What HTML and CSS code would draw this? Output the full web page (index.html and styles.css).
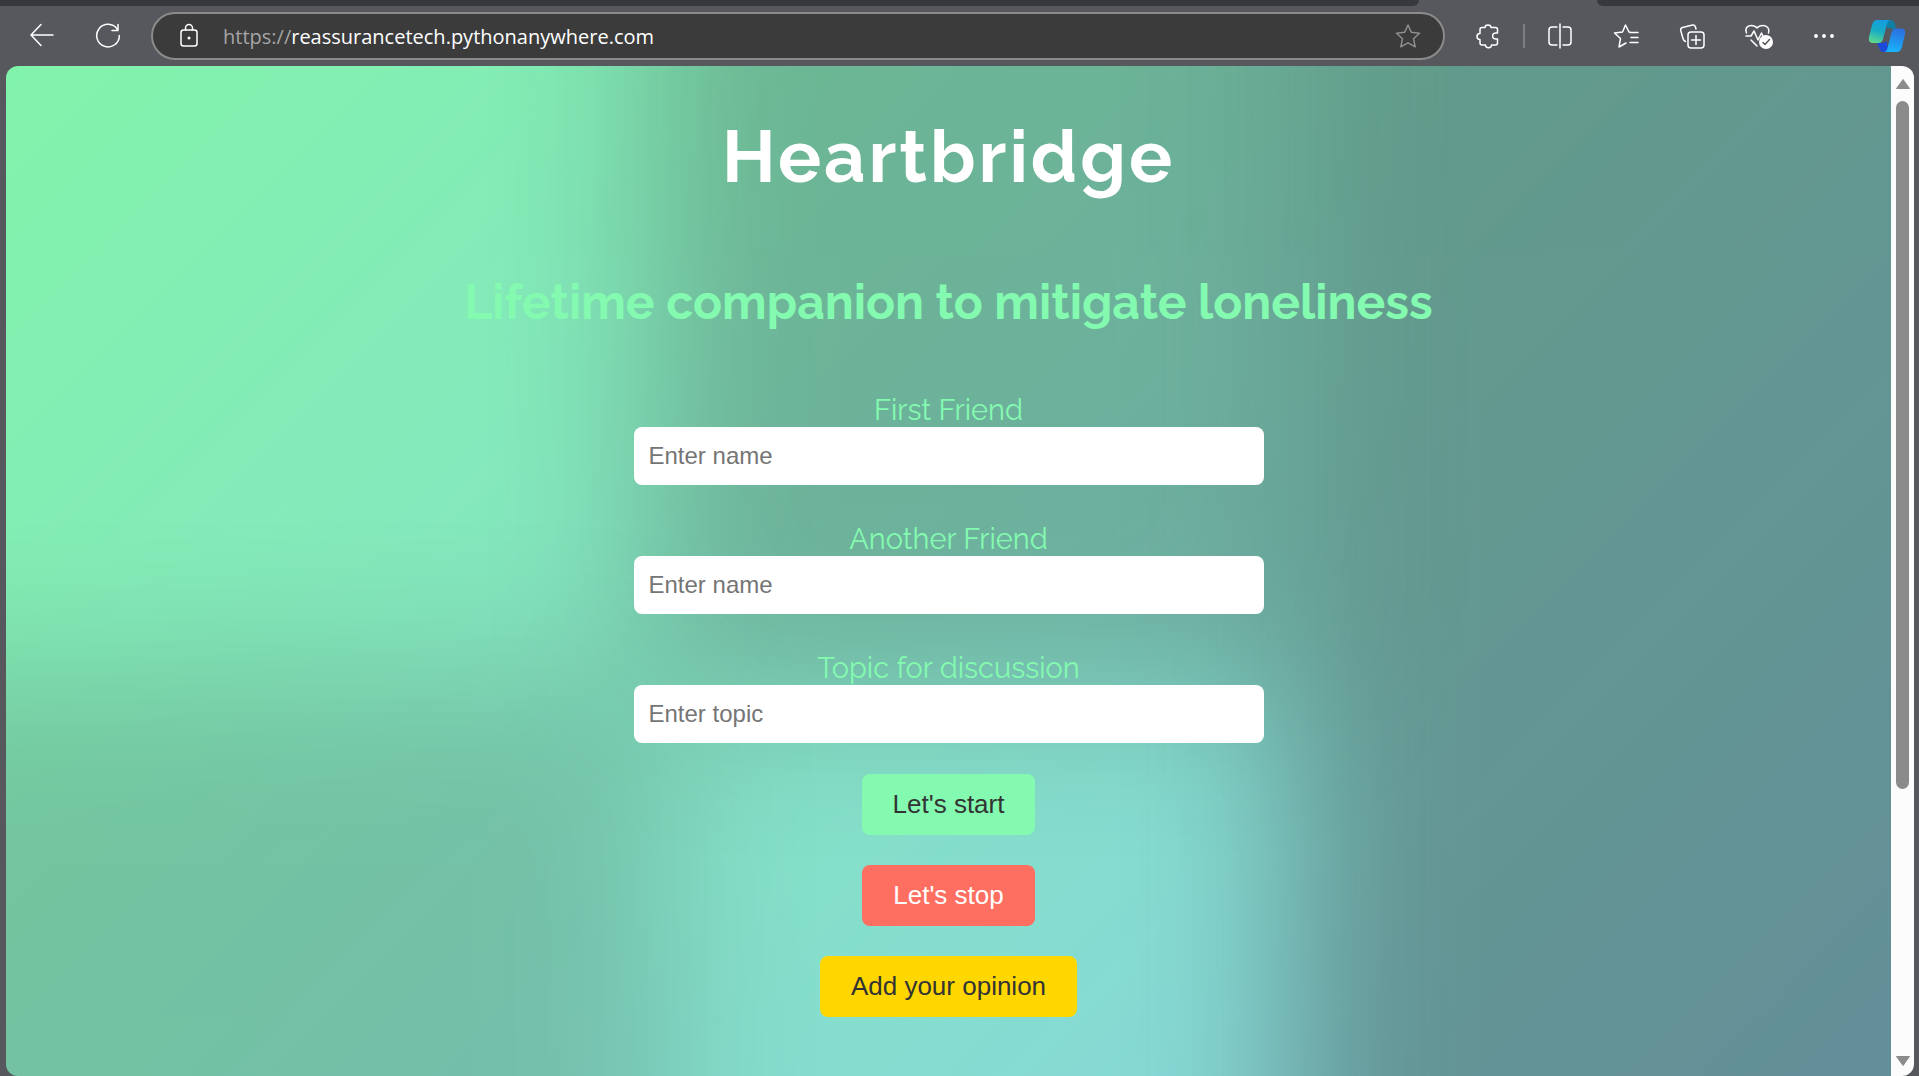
FILE: index.html
```
<!DOCTYPE html>
<html lang="en">
<head>
    <meta charset="UTF-8">
    <meta name="viewport" content="width=device-width, initial-scale=1.0">
    <title>Heartbridge</title>
    <link rel="stylesheet" href="styles.css">
</head>
<body>
    <!-- Browser tabs and toolbar -->
    <div class="tab-strip">
        <div class="tabs-before"></div>
        <div class="tab-active"></div>
        <div class="tabs-after"></div>
    </div>
    <header class="toolbar">
        <button class="tool" aria-label="Back">
            <svg width="26" height="26" viewBox="0 0 26 26"><path d="M24 12H3M12 1.500L2 12L12 22.500"/></svg>
        </button>
        <button class="tool reload" aria-label="Refresh">
            <svg width="26" height="26" viewBox="0 0 26 26"><path d="M24.300 12.500A11.300 11.300 0 1 1 22.500 6.500M23 1.500V7.500H17"/></svg>
        </button>
        <div class="address-bar">
            <svg class="lock" width="22" height="26" viewBox="0 0 22 26"><rect x="2" y="7" width="16" height="16" rx="2.500"/><path d="M6.500 7V5a3.500 3.500 0 0 1 7 0v2"/><circle class="solid" cx="10" cy="15" r="1.500"/></svg>
            <div class="url"><span class="scheme">https://</span>reassurancetech.pythonanywhere.com</div>
            <button class="star" aria-label="Add to favorites">
                <svg width="26" height="26" viewBox="0 0 26 26"><path d="M13 2L16.300 9.300L24.500 10.200L18.500 15.700L20.200 23.800L13 19.800L5.800 23.800L7.500 15.700L1.500 10.200L9.700 9.300Z"/></svg>
            </button>
        </div>
        <button class="tool" aria-label="Extensions">
            <svg width="26" height="26" viewBox="0 0 26 26"><path d="M5 6.500Q5 4.500 7 4.500H10C10 1 16 1 16 4.500H20.500Q22.500 4.500 22.500 6.500V10H21C16.500 10 16.500 16 21 16H22.500V20Q22.500 22 20.500 22H16.500C16.500 25.500 10.500 25.500 10.500 22H7Q5 22 5 20V16.500C1 16.500 1 10.500 5 10.500Z"/></svg>
        </button>
        <span class="divider"></span>
        <button class="tool" aria-label="Split screen">
            <svg width="26" height="26" viewBox="0 0 26 26"><path d="M10 4H5Q2 4 2 7V19Q2 22 5 22H10M16 4H21Q24 4 24 7V19Q24 22 21 22H16M13 1V25"/></svg>
        </button>
        <button class="tool" aria-label="Favorites">
            <svg width="26" height="26" viewBox="0 0 26 26"><path d="M18 9.500L16 9L12.500 2L9.500 9L1.500 10L7.500 15.500L6 24L13 20M17 9.500H25M18 14.500H25M17 19.500H25"/></svg>
        </button>
        <button class="tool" aria-label="Collections">
            <svg width="26" height="26" viewBox="0 0 26 26"><path d="M17 6L16.300 3.500Q15.600 1.500 13.500 2L3.500 4.500Q1.300 5.200 1.700 7.500L4 15.500Q4.500 17.500 6.500 18.500"/><rect x="9" y="9" width="16" height="16" rx="3"/><path d="M17 12.500V21.500M12.500 17H21.500"/></svg>
        </button>
        <button class="tool" aria-label="Browser essentials">
            <svg width="30" height="28" viewBox="0 0 30 28"><path d="M3.500 11C1.500 7 4 3.500 8 3.500Q12 3.500 14 6Q16 3.500 20 3.500C24.500 3.500 27 7.500 25.500 11M3 14H8L11 9L15 18L18.500 11L20 14M8 18L14 24"/><circle class="solid" cx="23" cy="20" r="7"/><path class="check" d="M20 20.500L22 22.500L26.500 17.500"/></svg>
        </button>
        <button class="tool" aria-label="Settings and more">
            <svg width="26" height="26" viewBox="0 0 26 26"><g class="solid"><circle cx="5" cy="13" r="1.900"/><circle cx="13" cy="13" r="1.900"/><circle cx="21" cy="13" r="1.900"/></g></svg>
        </button>
        <button class="tool copilot" aria-label="Copilot">
            <svg width="38" height="34" viewBox="0 0 38 34">
                <defs>
                    <linearGradient id="leaf-left" x1="0.600" y1="0" x2="0.300" y2="1"><stop offset="0" stop-color="#139ce0"/><stop offset="0.500" stop-color="#17adc4"/><stop offset="1" stop-color="#5fd88f"/></linearGradient>
                    <linearGradient id="leaf-right" x1="0.600" y1="0" x2="0.400" y2="1"><stop offset="0" stop-color="#2b6fe0"/><stop offset="1" stop-color="#18b4fb"/></linearGradient>
                </defs>
                <path fill="#0f7fa5" d="M18 1H22Q26 1 27 5L28 10H24Q20 8 19 10Z"/>
                <path fill="#1b49d8" d="M9 24H13Q17 24 18.500 22L21 33H16Q12.500 33 11.500 30Z"/>
                <path fill="url(#leaf-left)" d="M9 1H23Q20 1 19 5L15 20Q14 24 10.500 24H5Q0 24 1 18L4 6Q5.500 1 9 1Z"/>
                <path fill="url(#leaf-right)" d="M28 9.500H33Q38 9.500 37 15L34 28Q32.500 33 29 33H16Q18.500 33 19.500 29L23.500 13.500Q24.500 9.500 28 9.500Z"/>
            </svg>
        </button>
    </header>

    <div class="window">
        <main class="page">
            <!-- Soft shadows behind the form -->
            <div class="shade shade-top"></div>
            <div class="shade shade-left"></div>
            <div class="shade shade-right"></div>

            <div class="content">
                <h1>Heartbridge</h1>
                <h2>Lifetime companion to mitigate loneliness</h2>
                <form>
                    <div class="field">
                        <label for="first">First Friend</label>
                        <input type="text" id="first" placeholder="Enter name">
                    </div>
                    <div class="field">
                        <label for="second">Another Friend</label>
                        <input type="text" id="second" placeholder="Enter name">
                    </div>
                    <div class="field">
                        <label for="topic">Topic for discussion</label>
                        <input type="text" id="topic" placeholder="Enter topic">
                    </div>
                    <button type="button" class="btn start">Let's start</button>
                    <button type="button" class="btn stop">Let's stop</button>
                    <button type="button" class="btn opinion">Add your opinion</button>
                </form>
            </div>
        </main>
        <div class="scrollbar">
            <svg width="16" height="12" viewBox="0 0 16 12"><path d="M8 1.500L14.500 10.500H1.500Z"/></svg>
            <div class="track"><div class="thumb"></div></div>
            <svg width="16" height="12" viewBox="0 0 16 12"><path d="M8 10.500L14.500 1.500H1.500Z"/></svg>
        </div>
    </div>
</body>
</html>
```
FILE: styles.css
```
* {
    box-sizing: border-box;
}
body {
    margin: 0;
    min-height: 100vh;
    display: flex;
    flex-direction: column;
    background-color: #57585d;
    font-family: "Liberation Sans", Arial, sans-serif;
}

/* Browser */
.tab-strip {
    display: flex;
    height: 6px;
}
.tabs-before {
    flex: 1419;
    background-color: #37383c;
    border-bottom-right-radius: 6px;
}
.tab-active {
    flex: 178;
}
.tabs-after {
    flex: 322;
    background-color: #37383c;
    border-bottom-left-radius: 6px;
}
.toolbar {
    display: flex;
    align-items: center;
    height: 60px;
    padding: 0 2px 0 9px;
}
.toolbar button {
    display: flex;
    align-items: center;
    justify-content: center;
    padding: 0;
    border: none;
    background: none;
}
.toolbar .tool {
    width: 66px;
    height: 48px;
}
.toolbar .copilot {
    width: 60px;
}
.toolbar svg {
    fill: none;
    stroke: #fff;
    stroke-width: 1.5;
    stroke-linecap: round;
    stroke-linejoin: round;
}
.toolbar .solid {
    fill: #fff;
    stroke: none;
}
.toolbar .check {
    stroke: #57585d;
}
.toolbar .copilot svg {
    stroke: none;
}
.address-bar {
    flex: 1;
    display: flex;
    align-items: center;
    height: 48px;
    margin: 0 10px;
    padding: 0 22px 0 26px;
    border: 2px solid #8b8b8b;
    border-radius: 24px;
    background-color: #3b3b3b;
}
.url {
    flex: 1;
    margin-left: 22px;
    font-family: "Segoe UI", "Open Sans", "Noto Sans", sans-serif;
    font-size: 20px;
    color: #fff;
}
.scheme {
    color: #a5a5a5;
}
.address-bar .star svg {
    stroke: #8f8f8f;
}
.divider {
    width: 2px;
    height: 24px;
    margin: 0 2px;
    background-color: #7d7e82;
}

/* Page */
.window {
    flex: 1;
    display: flex;
    margin: 0 5px 0 6px;
    border-radius: 12px;
    overflow: hidden;
}
.page {
    flex: 1;
    position: relative;
    overflow: hidden;
    background: linear-gradient(135deg, #82f3ab 0%, #86d9d5 75%, #86cedd 100%);
}
.shade {
    position: absolute;
    background-color: #2e2e2e;
    filter: blur(80px);
}
.shade-top {
    left: 34%;
    right: 31%;
    top: -300px;
    height: 930px;
    opacity: 0.27;
}
.shade-left {
    left: -300px;
    right: 65%;
    top: 60%;
    bottom: -300px;
    opacity: 0.19;
}
.shade-right {
    left: 68%;
    right: -300px;
    top: -300px;
    bottom: -300px;
    opacity: 0.39;
}
.content {
    position: relative;
    padding: 48px 20px;
    text-align: center;
    font-family: Raleway, Lato, sans-serif;
    color: #84fab0;
}
h1 {
    margin: 0 0 66px;
    font-size: 72px;
    line-height: 86px;
    letter-spacing: 3px;
    color: #fff;
}
h2 {
    margin: 0 0 55px;
    font-size: 48px;
    line-height: 72px;
}
form {
    display: flex;
    flex-direction: column;
    align-items: center;
    gap: 30px;
}
.field {
    width: 100%;
    max-width: 630px;
    margin-bottom: 7px;
}
.field label {
    display: block;
    font-size: 29px;
    line-height: 34px;
}
.field input {
    display: block;
    width: 100%;
    height: 58px;
    padding: 0 15px;
    border: none;
    border-radius: 8px;
    font-family: "Liberation Sans", Arial, sans-serif;
    font-size: 24px;
}
.field input::placeholder {
    color: #757575;
}
.field + .btn {
    margin-top: -6px;
}
.btn {
    height: 61px;
    padding: 0 31px;
    border: none;
    border-radius: 8px;
    font-family: "Liberation Sans", Arial, sans-serif;
    font-size: 26px;
    color: #333;
    cursor: pointer;
}
.start {
    background-color: #84fab0;
}
.stop {
    background-color: #ff6f61;
    color: #fff;
}
.opinion {
    background-color: #ffd700;
}

/* Scrollbar */
.scrollbar {
    display: flex;
    flex-direction: column;
    align-items: center;
    gap: 11px;
    width: 23px;
    padding: 12px 0 9px;
    background-color: #fcfcfc;
}
.scrollbar svg {
    fill: #8b8b8b;
    stroke: #8b8b8b;
    stroke-linejoin: round;
}
.track {
    flex: 1;
    width: 13px;
}
.thumb {
    height: 73%;
    border-radius: 7px;
    background-color: #8b8b8b;
}
```
